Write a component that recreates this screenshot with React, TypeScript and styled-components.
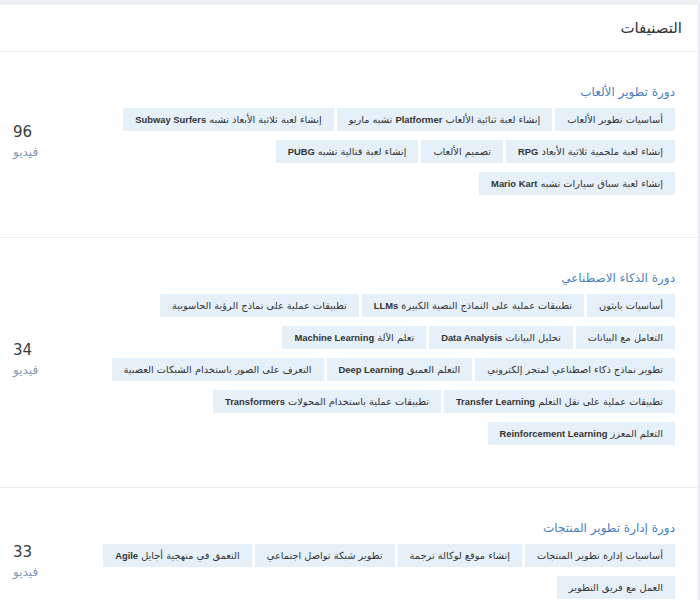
import React from 'react';
import styled, { createGlobalStyle } from 'styled-components';

const GlobalStyle = createGlobalStyle`
  *, *::before, *::after {
    box-sizing: border-box;
  }
  html, body {
    margin: 0;
    padding: 0;
    background: #eceff3;
  }
  body {
    font-family: "DejaVu Sans", "Noto Sans", sans-serif;
    color: #333;
  }
`;

type Course = {
  title: string;
  count: number;
  tags: string[];
};

const courses: Course[] = [
  {
    title: 'دورة تطوير الألعاب',
    count: 96,
    tags: [
      'أساسيات تطوير الألعاب',
      'إنشاء لعبة ثنائية الألعاب Platformer تشبه ماريو',
      'إنشاء لعبة ثلاثية الأبعاد تشبه Subway Surfers',
      'إنشاء لعبة ملحمية ثلاثية الأبعاد RPG',
      'تصميم الألعاب',
      'إنشاء لعبة قتالية تشبه PUBG',
      'إنشاء لعبة سباق سيارات تشبه Mario Kart',
    ],
  },
  {
    title: 'دورة الذكاء الاصطناعي',
    count: 34,
    tags: [
      'أساسيات بايثون',
      'تطبيقات عملية على النماذج النصية الكبيرة LLMs',
      'تطبيقات عملية على نماذج الرؤية الحاسوبية',
      'التعامل مع البيانات',
      'تحليل البيانات Data Analysis',
      'تعلم الآلة Machine Learning',
      'تطوير نماذج ذكاء اصطناعي لمتجر إلكتروني',
      'التعلم العميق Deep Learning',
      'التعرف على الصور باستخدام الشبكات العصبية',
      'تطبيقات عملية على نقل التعلم Transfer Learning',
      'تطبيقات عملية باستخدام المحولات Transformers',
      'التعلم المعزز Reinforcement Learning',
    ],
  },
  {
    title: 'دورة إدارة تطوير المنتجات',
    count: 33,
    tags: [
      'أساسيات إدارة تطوير المنتجات',
      'إنشاء موقع لوكالة ترجمة',
      'تطوير شبكة تواصل اجتماعي',
      'التعمق في منهجية أجايل Agile',
      'العمل مع فريق التطوير',
    ],
  },
];

const Page = styled.div`
  padding-top: 5px;
  direction: rtl;
`;

const Panel = styled.div`
  background: #fff;
  border-right: 1px solid #e6e9ee;
  margin-right: 1px;
  min-height: 595px;
`;

const PanelHeader = styled.div`
  height: 47px;
  display: flex;
  align-items: center;
  padding: 0 16px;
  border-bottom: 1px solid #ebedf0;
  font-size: 15px;
  color: #333;
`;

const Section = styled.div`
  display: flex;
  align-items: center;
  padding: 30px 23px 42px 0;
  border-bottom: 1px solid #ebedf0;
`;

const Content = styled.div`
  flex: 1;
`;

const Title = styled.h3`
  margin: 0 0 6px;
  font-weight: normal;
  font-size: 12px;
  line-height: 20px;
  color: #4a80bf;
`;

const Tags = styled.div`
  display: flex;
  flex-wrap: wrap;
  gap: 9px 3px;
`;

const Tag = styled.span`
  display: inline-block;
  height: 23px;
  line-height: 23px;
  padding: 0 12px;
  background: #e6f0f9;
  color: #333;
  font-size: 9.8px;
  white-space: nowrap;
`;

const Latin = styled.span`
  font-family: "Liberation Sans", Arial, sans-serif;
  font-size: 9.4px;
  font-weight: bold;
  color: #333;
`;

const Count = styled.div`
  width: 96px;
  padding-left: 13px;
  padding-top: 6px;
  text-align: left;
  direction: ltr;
`;

const Number = styled.div`
  font-size: 15px;
  line-height: 21px;
  color: #3a3a3a;
`;

const Label = styled.div`
  font-size: 12px;
  line-height: 19px;
  color: #8299b3;
`;

// Latin words in the tags are set in a Latin face next to the Arabic
function renderTag(text: string) {
  const parts = text.split(/([A-Za-z][A-Za-z ]*[A-Za-z])/);
  return parts.map((p, i) => (i % 2 === 1 ? <Latin key={i}>{p}</Latin> : p));
}

export default function App() {
  return (
    <>
      <GlobalStyle />
      <Page>
        <Panel>
          <PanelHeader>التصنيفات</PanelHeader>
          {courses.map((c) => (
            <Section key={c.title}>
              <Content>
                <Title>{c.title}</Title>
                <Tags>
                  {c.tags.map((t) => (
                    <Tag key={t}>{renderTag(t)}</Tag>
                  ))}
                </Tags>
              </Content>
              <Count>
                <Number>{c.count}</Number>
                <Label>فيديو</Label>
              </Count>
            </Section>
          ))}
        </Panel>
      </Page>
    </>
  );
}
